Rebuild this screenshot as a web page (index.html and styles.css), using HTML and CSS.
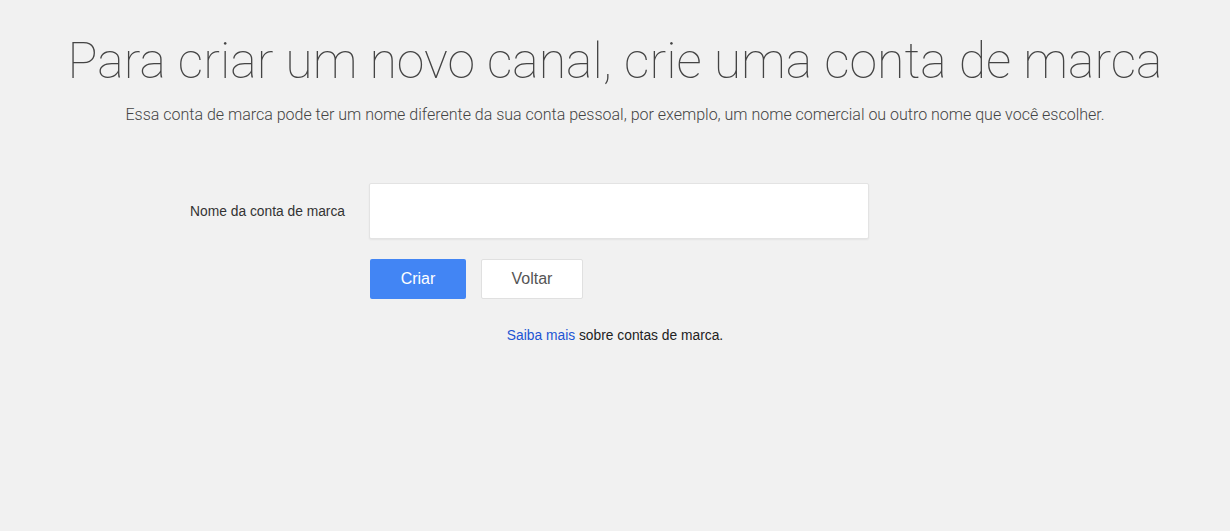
FILE: index.html
```html
<!DOCTYPE html>
<html lang="pt-BR">
<head>
<meta charset="UTF-8">
<title>Criar canal</title>
<link rel="stylesheet" href="styles.css">
</head>
<body>
<div class="page">
    <h1 class="title">Para criar um novo canal, crie uma conta de marca</h1>
    <p class="subtitle">Essa conta de marca pode ter um nome diferente da sua conta pessoal, por exemplo, um nome comercial ou outro nome que você escolher.</p>

    <!-- form -->
    <form class="brand-form" onsubmit="return false">
        <div class="row">
            <label for="brandName" class="field-label">Nome da conta de marca</label>
            <input type="text" id="brandName" class="field-input">
        </div>
        <div class="row">
            <span class="field-label"></span>
            <div class="actions">
                <button type="submit" class="btn btn-primary">Criar</button>
                <button type="button" class="btn btn-secondary">Voltar</button>
            </div>
        </div>
    </form>

    <p class="learn-more"><a href="#">Saiba mais</a> sobre contas de marca.</p>
</div>
</body>
</html>
```

FILE: styles.css
```css
body {
    margin: 0;
    background-color: #f1f1f1;
    font-family: Arial, "Liberation Sans", sans-serif;
}
.page {
    padding-top: 31px;
}
.title {
    margin: 0;
    text-align: center;
    font-family: Roboto, sans-serif;
    font-weight: 100;
    font-size: 50px;
    line-height: 60px;
    color: #444;
}
.subtitle {
    margin: 13px 0 0;
    text-align: center;
    font-family: Roboto, sans-serif;
    font-weight: 300;
    font-size: 16px;
    line-height: 22px;
    color: #444;
}
.brand-form {
    margin: 57px 0 0 145px;
}
.row {
    display: flex;
    align-items: center;
    gap: 24px;
    margin-bottom: 20px;
}
.field-label {
    width: 200px;
    text-align: right;
    font-size: 13.8px;
    color: #333;
}
.field-input {
    box-sizing: border-box;
    width: 500px;
    height: 56px;
    margin: 0;
    padding: 0 12px;
    border: 1px solid #e3e3e3;
    border-radius: 2px;
    background: #fff;
    box-shadow: 0 1px 2px rgba(0,0,0,0.06);
    font-size: 16px;
}
.actions {
    display: flex;
    gap: 15px;
    margin-left: 1px;
}
.btn {
    box-sizing: border-box;
    height: 40px;
    border-radius: 2px;
    font-family: Arial, "Liberation Sans", sans-serif;
    font-size: 16px;
    cursor: pointer;
}
.btn-primary {
    width: 96px;
    border: none;
    background-color: #4285f4;
    color: #fff;
}
.btn-secondary {
    width: 102px;
    border: 1px solid #e0e0e0;
    background-color: #fff;
    color: #555;
}
.learn-more {
    margin: 0;
    padding-top: 9px;
    text-align: center;
    font-size: 13.8px;
    color: #222;
}
.learn-more a {
    color: #2155d3;
    text-decoration: none;
}
```
